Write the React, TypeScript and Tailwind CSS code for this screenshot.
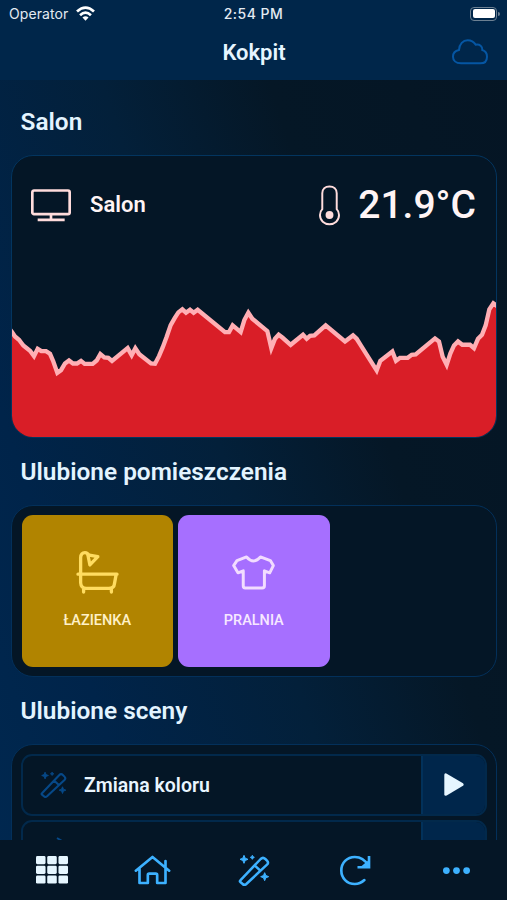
import React from 'react'

const points =
  '30,118 36,126 45,139 57,149 70,166 90,182 102,198 113,176 124,183 138,183 150,191 160,214 172,248 183,240 195,220 207,211 219,220 231,220 243,212 254,221 278,221 290,211 301,192 313,202 325,203 336,212 383,174 395,195 406,174 418,192 453,220 465,221 477,198 488,172 500,140 512,105 524,84 535,67 547,58 558,68 570,59 581,68 593,59 675,126 687,126 698,106 722,126 733,90 745,68 757,86 802,123 808,148 814,174 825,146 836,134 848,143 872,164 909,134 920,146 930,137 943,136 977,106 1035,154 1059,136 1070,146 1082,165 1118,222 1130,241 1141,212 1177,184 1188,212 1200,203 1223,203 1235,194 1247,193 1305,145 1317,154 1328,200 1340,224 1351,190 1362,166 1374,154 1387,164 1410,164 1422,174 1434,146 1446,134 1457,106 1468,58 1480,40 1494,50'

function Wand({ className }: { className: string }) {
  return (
    <svg viewBox="0 0 96 96" className={className} fill="none" stroke="currentColor" strokeWidth="7.500" strokeLinejoin="round">
      <path d="M7 79 L68 15 Q75 8 82 15 L87 20 Q93 26 87 32 L25 90 Q19 95 14 90 L7 84 Q4 82 7 79 Z M50 34 L67 50" />
      <path d="M18 4 L21.500 12.500 L30 16 L21.500 19.500 L18 28 L14.500 19.500 L6 16 L14.500 12.500 Z M80 56 L83.500 64.500 L92 68 L83.500 71.500 L80 80 L76.500 71.500 L68 68 L76.500 64.500 Z M43 4 L45 8 L49 10 L45 12 L43 16 L41 12 L37 10 L41 8 Z" fill="currentColor" strokeWidth="3" />
    </svg>
  )
}

function Title({ children }: { children: React.ReactNode }) {
  return <h2 className="flex h-[67px] items-center pl-[9.500px] pt-[2px] text-[24.400px] font-semibold text-[#e3f4ff]">{children}</h2>
}

function Scene({ children, action }: { children: React.ReactNode; action?: React.ReactNode }) {
  return (
    <div className="flex h-[61.500px] shrink-0 overflow-hidden rounded-[11px] border-2 border-[#02294b]">
      <div className="flex flex-1 items-center">{children}</div>
      <button className="flex w-[64px] items-center justify-center border-l-2 border-[#02315a] bg-[#00264b]">{action}</button>
    </div>
  )
}

export default function App() {
  return (
    <div className="flex h-[900px] w-[507px] flex-col overflow-hidden bg-[linear-gradient(72deg,#002850_0%,#00244a_20%,#03203a_46%,#051726_67%,#051524_100%)] font-['Roboto',sans-serif]">
      <header className="h-[80px] shrink-0 bg-[#00264a]">
        <div className="grid h-[27px] grid-cols-3 items-center pl-[9px] pr-[7px] font-['Inter',sans-serif] text-[14px] text-[#e4ebf2]">
          <div className="flex items-center gap-[6px]">
            <span className="w-[61px] tracking-[0.1px]">Operator</span>
            <svg viewBox="0 0 56 44" className="h-[15px] w-[19px]" fill="none" stroke="white" strokeWidth="8">
              <path d="M3 16 Q28 -7 53 16" />
              <path d="M12 27 Q28 12 44 27" />
              <path d="M19 34 Q28 26 37 34 L28 43 Z" fill="white" stroke="none" />
            </svg>
          </div>
          <span className="pr-[2px] text-center font-medium tracking-[0.500px]">2:54 PM</span>
          <div className="flex items-center justify-end">
            <div className="h-[14px] w-[27px] rounded-[4px] border border-[#6c8092] p-[1.500px]">
              <div className="h-full rounded-[2px] bg-white" />
            </div>
            <div className="ml-px h-[4px] w-[2px] rounded-r bg-[#6c8092]" />
          </div>
        </div>
        <div className="grid h-[50px] grid-cols-3 items-center pr-[19px]">
          <span />
          <h1 className="pl-[20px] text-center text-[22px] font-semibold text-[#e6f5ff]">Kokpit</h1>
          <svg viewBox="0 0 108 78" className="h-[26px] w-[36px] justify-self-end" fill="none" stroke="#0556a3" strokeWidth="6">
            <path d="M27 73 C11 73 3 64 3 53 C3 42 10 35 21 33 C22 15 33 4 47 4 C57 4 65 8 71 17 C83 15 92 22 91 33 C100 36 105 45 105 53 C105 66 97 73 85 73 Z" />
          </svg>
        </div>
      </header>

      <main className="min-h-0 flex-1 overflow-hidden pl-[11px] pr-[10px] pt-[8px]">
        <Title>Salon</Title>
        <section className="flex h-[283px] flex-col justify-between overflow-hidden rounded-[22px] border border-[#03355f] bg-[#041626]">
          <div className="flex items-center pl-[19px] pr-[20px] pt-[19px]">
            <svg viewBox="0 0 120 98" className="h-[33px] w-[40px]" fill="none" stroke="#ffdcdc" strokeWidth="8">
              <rect x="4" y="4" width="112" height="71" rx="5" />
              <path d="M60 75 V92 M20 92 H101" />
            </svg>
            <span className="ml-[19px] text-[22px] font-semibold leading-[30px] text-[#fff4f5]">Salon</span>
            <svg viewBox="0 0 64 122" className="ml-auto h-[41px] w-[21px]" fill="none" stroke="#ffdcdc" strokeWidth="6">
              <path d="M10 72 V24 C10 11 19 3 32 3 C45 3 54 11 54 24 V72 C59 77 61 83 61 90 C61 107 48 118 32 118 C16 118 3 107 3 90 C3 83 5 77 10 72 Z" />
              <circle cx="32" cy="90" r="12" fill="#ffdcdc" stroke="none" />
            </svg>
            <span className="ml-[18px] text-[39px] font-medium leading-[60px] text-[#fff4f5]">21.9°C</span>
          </div>
          <svg viewBox="36 0 1452 440" preserveAspectRatio="none" className="h-[147px] shrink-0">
            <polygon points={`${points} 1494,450 30,450`} fill="#d91e27" />
            <polyline points={points} fill="none" stroke="#ffafb4" strokeWidth="13" />
          </svg>
        </section>

        <Title>Ulubione pomieszczenia</Title>
        <section className="flex h-[172px] gap-[5px] rounded-[22px] border border-[#03305a] bg-[#041626] px-[9.500px] py-[9px]">
          <div className="flex h-[152px] w-[151.500px] flex-col items-center rounded-[11px] bg-[#b18400] pt-[36px]">
            <svg viewBox="0 0 128 130" className="h-[43px] w-[43px]" fill="none" stroke="#ffdc60" strokeWidth="10" strokeLinecap="round" strokeLinejoin="round">
              <path d="M5 70 H123 M13 70 V96 Q14 113 30 113 H98 Q114 113 115 100 L120 73 M22 115 V124 M106 115 V124 M13 70 V20 Q14 5 26 5 Q34 5 37 13" />
              <path d="M35 12 L65 17 L41 42 Z" />
            </svg>
            <span className="mt-[16px] text-[14.500px] font-medium text-[#fff1c8]">ŁAZIENKA</span>
          </div>
          <div className="flex h-[152px] w-[151.500px] flex-col items-center rounded-[11px] bg-[#a66fff] pt-[36px]">
            <svg viewBox="0 0 128 130" className="h-[43px] w-[43px]" fill="none" stroke="#f2dcff" strokeWidth="9" strokeLinejoin="round">
              <path d="M43 18 Q64 42 85 18 L115 29 L124 44 L113 66 L97 60 V105 Q97 112 90 112 H39 Q33 112 33 105 V60 L17 66 L4 44 L14 29 Z" />
            </svg>
            <span className="mt-[16px] text-[14.500px] font-medium text-[#f7e8ff]">PRALNIA</span>
          </div>
        </section>

        <Title>Ulubione sceny</Title>
        <section className="flex h-[240px] flex-col gap-[4.500px] rounded-[22px] border border-[#03305a] bg-[#041626] p-[9px]">
          <Scene
            action={
              <svg viewBox="0 0 60 68" className="h-[23px] w-[20px]" fill="#e6f6ff">
                <path d="M1 5 Q1 -1 7 1 L57 30 Q61 34 57 38 L8 67 Q1 69 1 63 Z" />
              </svg>
            }
          >
            <Wand className="ml-[17px] h-[27px] w-[27px] text-[#064887]" />
            <span className="ml-[17px] pt-[2px] text-[19.500px] font-semibold text-[#e9f5ff]">Zmiana koloru</span>
          </Scene>
          <Scene>
            <svg viewBox="0 0 27 27" className="ml-[17px] h-[27px] w-[27px]" fill="none" stroke="#064887" strokeWidth="2">
              <path d="M17 1 L22 4 L17 7" />
            </svg>
          </Scene>
        </section>
      </main>

      <nav className="grid h-[60px] shrink-0 grid-cols-5 place-items-center bg-[#051626] text-[#3db1ff]">
        <svg viewBox="0 0 94 82" className="ml-[2px] h-[28px] w-[32px]" fill="#e6f6ff">
          {[0, 28.5, 57].map((y) =>
            [0, 33, 66].map((x) => <rect key={`${x}-${y}`} x={x} y={y} width="28" height="24" rx="4" />)
          )}
        </svg>
        <svg viewBox="0 0 110 90" className="h-[30px] w-[37px]" fill="none" stroke="currentColor" strokeWidth="8" strokeLinejoin="round" strokeLinecap="round">
          <path d="M5 47 L55 6 L105 47 M16 40 V84 H41 V60 Q41 56 45 56 H65 Q69 56 69 60 V84 H94 V38 M94 18 V36" />
        </svg>
        <Wand className="ml-px h-[32px] w-[32px]" />
        <svg viewBox="0 0 94 92" className="ml-[2px] h-[31px] w-[31px]" fill="none" stroke="currentColor" strokeWidth="8">
          <path d="M74 75 C64 84 55 87 45 87 C21 87 4 69 4 46 C4 23 21 5 45 5 C63 5 76 14 85 30" strokeLinecap="round" />
          <path d="M88 2 V36 H53 M84 22 V32 H72 Z" />
        </svg>
        <svg viewBox="0 0 80 20" className="h-[7px] w-[27px]" fill="currentColor">
          <circle cx="10" cy="10" r="10" />
          <circle cx="40" cy="10" r="10" />
          <circle cx="70" cy="10" r="10" />
        </svg>
      </nav>
    </div>
  )
}
